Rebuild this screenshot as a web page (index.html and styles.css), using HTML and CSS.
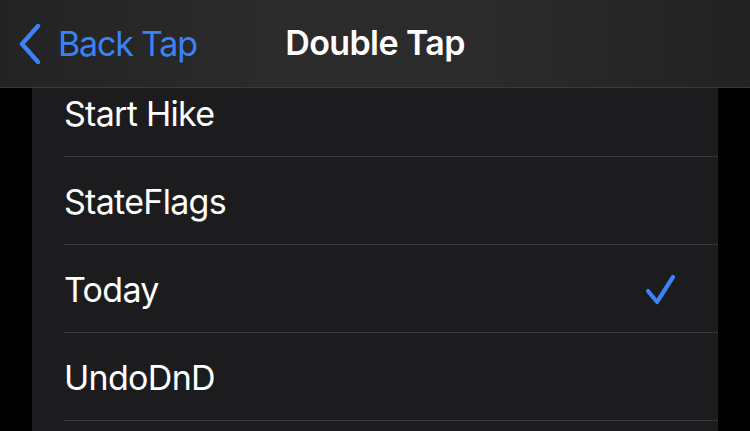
FILE: index.html
```html
<!DOCTYPE html>
<html>
<head>
<meta charset="utf-8">
<link rel="stylesheet" href="styles.css">
</head>
<body>
<header class="navbar">
  <a class="back">
    <svg class="chev" width="26" height="40" viewBox="0 0 26 40"><path d="M21 2 L5 20 L21 38" fill="none" stroke="#3a82f6" stroke-width="4.4" stroke-linecap="round" stroke-linejoin="round"/></svg>
    <span class="back-label">Back Tap</span>
  </a>
  <h1 class="title">Double Tap</h1>
</header>
<main class="content">
  <ul class="list">
    <li class="row"><span class="label">Start Hike</span></li>
    <li class="row"><span class="label">StateFlags</span></li>
    <li class="row"><span class="label">Today</span>
      <svg class="check" width="34" height="32" viewBox="0 0 34 32"><path d="M4 17 L13 28 L29 3" fill="none" stroke="#3a82f6" stroke-width="4.2" stroke-linecap="round" stroke-linejoin="round"/></svg>
    </li>
    <li class="row"><span class="label">UndoDnD</span></li>
    <li class="row"></li>
  </ul>
</main>
</body>
</html>
```
FILE: styles.css
```css
html, body {
  margin: 0;
  padding: 0;
  background: #000;
  width: 750px;
  height: 431px;
  overflow: hidden;
  font-family: Inter, "Liberation Sans", sans-serif;
  -webkit-font-smoothing: antialiased;
}
.navbar {
  position: relative;
  z-index: 2;
  height: 88px;
  box-sizing: border-box;
  border-bottom: 1px solid #3b3b3d;
  background: linear-gradient(90deg, #232323 0%, #2b2b2b 35%, #2b2b2b 65%, #222 100%);
  display: flex;
  align-items: center;
  justify-content: center;
}
.back {
  position: absolute;
  left: 17px;
  top: 24px;
  display: flex;
  align-items: center;
  gap: 15px;
  color: #3a82f6;
}
.chev { display: block; }
.back-label {
  font-size: 34px;
  letter-spacing: -1.2px;
  line-height: 40px;
}
.title {
  margin: 0;
  color: #fff;
  font-size: 34px;
  font-weight: 600;
  letter-spacing: -0.6px;
  line-height: 40px;
  margin-top: -2px;
}
.content {
  height: 343px;
  overflow: hidden;
  padding: 0 32px;
}
.list {
  list-style: none;
  margin: -19px 0 0 0;
  padding: 0 0 0 32px;
  background: #1c1c1e;
}
.row {
  height: 88px;
  box-sizing: border-box;
  border-bottom: 1px solid #3a3a3c;
  display: flex;
  align-items: center;
  justify-content: space-between;
  padding-right: 40px;
}
.label {
  color: #fff;
  font-size: 34px;
  letter-spacing: -0.7px;
  margin-top: 1px;
}
.check { display: block; margin-top: 2px; }
```
